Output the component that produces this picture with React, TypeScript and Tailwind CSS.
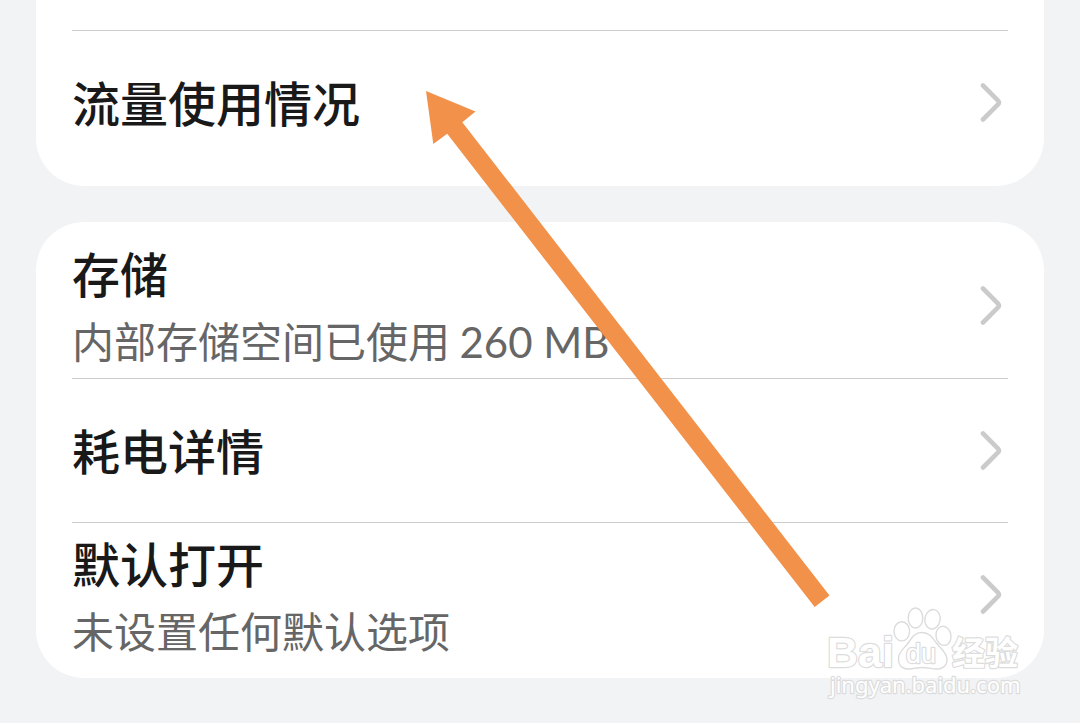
import React from "react";

type Item = { title: string; detail?: React.ReactNode };

const usage: Item[] = [{ title: "流量使用情况" }];

const details: Item[] = [
  {
    title: "存储",
    detail: (
      <>
        内部存储空间已使用 <span className="font-['Lato','Noto_Sans_CJK_SC',sans-serif]">260 MB</span>
      </>
    ),
  },
  { title: "耗电详情" },
  { title: "默认打开", detail: "未设置任何默认选项" },
];

function Chevron() {
  return (
    <svg className="mr-1 h-10 w-6 shrink-0" viewBox="0 0 24 40" fill="none" aria-hidden="true">
      <path
        d="M3 2.5 L17.8 17.3 Q20 19.5 17.8 21.7 L3 36.5"
        stroke="#cbcbcb"
        strokeWidth="4.6"
        strokeLinecap="round"
        strokeLinejoin="round"
      />
    </svg>
  );
}

function Row({ item }: { item: Item }) {
  return (
    <button type="button" className="flex h-full w-full items-center justify-between text-left">
      <span className={item.detail ? "flex flex-col pt-0.5" : "flex flex-col pb-1"}>
        <span className="text-[48px] leading-[72px] font-medium text-[#191919]">{item.title}</span>
        {item.detail && (
          <span className="pb-1 text-[42px] leading-[64px] whitespace-nowrap text-[#666666]">{item.detail}</span>
        )}
      </span>
      <Chevron />
    </button>
  );
}

function Rows({ items, topLine = false }: { items: Item[]; topLine?: boolean }) {
  return (
    <ul>
      {items.map((item, index) => (
        <li key={item.title} className={topLine || index > 0 ? "h-36 border-t border-[#cbcbcb]" : "h-36"}>
          <Row item={item} />
        </li>
      ))}
    </ul>
  );
}

function Arrow() {
  return (
    <svg
      className="pointer-events-none absolute top-[91px] left-[426px] h-[516px] w-[404px]"
      viewBox="426 91 404 516"
      aria-hidden="true"
    >
      <polygon points="426,91 475.5,111.5 462.3,122.2 829.5,595.5 814.7,607 447.2,133.8 433.3,144" fill="#f29149" />
    </svg>
  );
}

function Watermark() {
  return (
    <svg
      className="pointer-events-none absolute top-[600px] right-[50px] h-[104px] w-[210px]"
      viewBox="820 600 210 104"
      role="img"
      aria-label="Baidu 经验"
    >
      <g fill="#ffffff" stroke="#dcdcdc" strokeWidth="1.4" strokeLinejoin="round">
        <ellipse cx="901.8" cy="631.3" rx="7.8" ry="9.6" />
        <ellipse cx="915.5" cy="618" rx="7.3" ry="10" />
        <ellipse cx="932.5" cy="619.3" rx="7.6" ry="9.8" transform="rotate(10 932.5 619.3)" />
        <ellipse cx="943.5" cy="635.8" rx="7.5" ry="9.6" transform="rotate(-10 943.5 635.8)" />
        <path d="M922 632.5 C929 632.5 932 637 936 642.5 C940 648 947 652 947 659.5 C947 666 942 669.5 936 669 C931 668.5 927 667.5 922 667.5 C917 667.5 912 669.5 907 669 C901 668.5 898 664 898.5 658 C899 651 905 648 909 642 C912.5 636.5 915 632.5 922 632.5 Z" />
        <g paintOrder="stroke" strokeWidth="2.4">
          <text x="827" y="667" fontSize="43" fontWeight="700" fontFamily="Liberation Sans, sans-serif">
            Bai
          </text>
          <text x="906" y="663" fontSize="27" fontFamily="Liberation Sans, sans-serif">
            du
          </text>
          <text x="952" y="665" fontSize="33" fontWeight="700" fontFamily="Noto Sans CJK SC, sans-serif">
            经验
          </text>
          <text x="830" y="693" fontSize="22" fontFamily="Noto Sans, sans-serif">
            jingyan.baidu.com
          </text>
        </g>
      </g>
    </svg>
  );
}

export default function App() {
  return (
    <main className="relative min-h-screen overflow-hidden bg-[#f1f3f5] px-9 font-['Noto_Sans_CJK_SC',sans-serif]">
      <section className="rounded-b-[48px] bg-white px-9 pt-[30px] pb-3">
        <Rows items={usage} topLine />
      </section>
      <section className="mt-9 rounded-[48px] bg-white px-9 py-3">
        <Rows items={details} />
      </section>
      <Arrow />
      <Watermark />
    </main>
  );
}
